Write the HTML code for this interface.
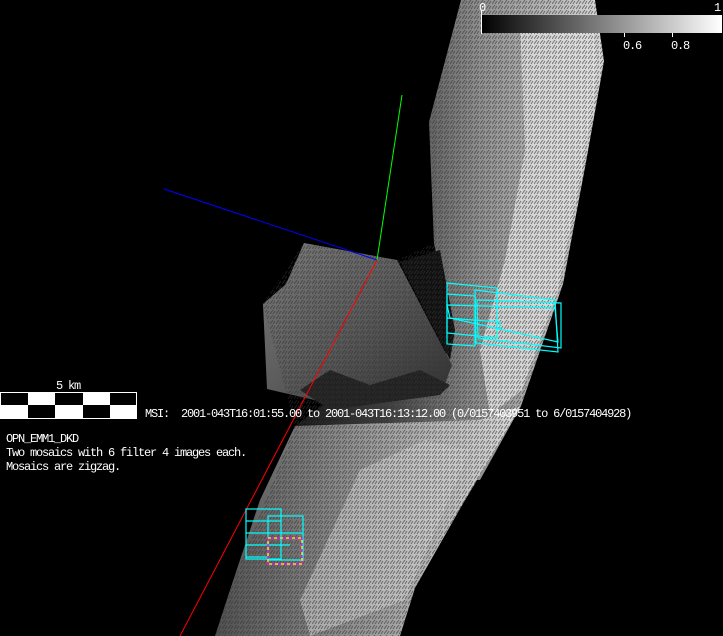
<!DOCTYPE html>
<html><head><meta charset="utf-8"><style>
html,body{margin:0;padding:0;background:#000;}
svg{display:block}
text{font-family:"Liberation Mono",monospace;fill:#fff;font-size:12px;letter-spacing:-1.2px;white-space:pre}
</style></head><body>
<svg width="723" height="636" viewBox="0 0 723 636" xmlns="http://www.w3.org/2000/svg">
<defs>
<linearGradient id="band" x1="0" y1="0" x2="1" y2="0">
<stop offset="0" stop-color="#151515"/><stop offset="0.3" stop-color="#404040"/><stop offset="0.6" stop-color="#909090"/><stop offset="1" stop-color="#d8d8d8"/>
</linearGradient>
<linearGradient id="low" x1="0" y1="0" x2="1" y2="0">
<stop offset="0" stop-color="#505050"/><stop offset="0.4" stop-color="#888"/><stop offset="0.75" stop-color="#bbb"/><stop offset="1" stop-color="#d8d8d8"/>
</linearGradient>
<linearGradient id="fan" x1="0" y1="0" x2="1" y2="1">
<stop offset="0" stop-color="#7a7a7a"/><stop offset="0.5" stop-color="#5a5a5a"/><stop offset="1" stop-color="#303030"/>
</linearGradient>
<linearGradient id="cb" x1="0" y1="0" x2="1" y2="0">
<stop offset="0" stop-color="#000"/><stop offset="1" stop-color="#fff"/>
</linearGradient>
<pattern id="dots" width="6" height="5" patternUnits="userSpaceOnUse">
<path d="M0 4 L3 0 M3 4 L5 1" stroke="#333" stroke-width="1"/>
</pattern>
<clipPath id="c"><path d="M461 0 L595 0 L604 61 L586 162 L563 284 L521 406 L461 507 L415 588 L400 636 L215 636 L230 590 L295 426 L263 304 L304 243 L397 260 L434 243 L429 122 Z"/></clipPath>
</defs>
<path d="M461 0 L595 0 L604 61 L586 162 L563 284 L521 406 L480 480 L300 470 L295 426 L330 400 L440 380 L452 330 L434 243 L429 122 Z" fill="url(#band)"/>
<path d="M520 20 L592 20 L598 70 L582 170 L558 290 L522 390 L490 415 L480 350 L505 260 L525 150 Z" fill="#e0e0e0" opacity="0.8"/>
<path d="M400 262 L440 250 L455 330 L450 360 Z" fill="#111"/>
<path d="M304 243 L397 260 L452 365 L443 389 L323 402 L267 389 L263 304 L286 284 Z" fill="url(#fan)"/>
<path d="M300 390 L330 370 L370 385 L420 370 L450 385 L440 395 L330 410 Z" fill="#222"/>
<path d="M295 426 L480 420 L521 406 L461 507 L415 588 L400 636 L215 636 L230 590 L260 500 Z" fill="url(#low)"/>
<path d="M360 470 L425 440 L470 450 L440 520 L405 600 L310 636 L300 600 Z" fill="#d0d0d0" opacity="0.55"/>
<rect x="0" y="0" width="723" height="636" fill="url(#dots)" clip-path="url(#c)" opacity="0.6"/>
<line x1="402" y1="95" x2="377" y2="260" stroke="#00ff00" stroke-width="1"/>
<line x1="164" y1="189" x2="377" y2="260" stroke="#0000ff" stroke-width="1"/>
<line x1="377" y1="260" x2="180" y2="636" stroke="#ff0000" stroke-width="1"/>
<g fill="none" stroke="#00ffff" stroke-width="1.2">
<path d="M447 283 L497 288 L497 338 L447 333 Z"/>
<path d="M447 294 L475 296 L475 346 L447 344 Z"/>
<path d="M475 290 L555 300 L558 352 L476 343 Z"/>
<path d="M477 300 L561 303 L561 348 L478 338 Z"/>
<path d="M447 305 L555 308 L558 342 L450 318 Z"/>
<path d="M447 318 L500 322 L500 330"/>
</g>
<g fill="none" stroke="#00ffff" stroke-width="1.2">
<rect x="246" y="509" width="35" height="50"/>
<rect x="268" y="516" width="35" height="44"/>
<path d="M246 521 L281 521 M246 533 L303 533 M246 545 L290 545 M246 557 L268 557"/>
</g>
<rect x="268" y="538" width="34" height="26" fill="none" stroke="#ff00ff" stroke-width="1.3"/>
<rect x="268" y="538" width="34" height="26" fill="none" stroke="#ffff00" stroke-width="1.3" stroke-dasharray="3 3"/>
<rect x="0.5" y="392.5" width="136" height="26" fill="#fff" stroke="#fff"/>
<g fill="#000">
<rect x="1" y="393" width="27" height="12"/><rect x="55" y="393" width="28" height="12"/><rect x="110" y="393" width="26" height="12"/>
<rect x="28" y="405" width="27" height="13"/><rect x="83" y="405" width="27" height="13"/>
</g>
<text x="56" y="389">5 km</text>
<text x="145" y="417" xml:space="preserve">MSI:  2001-043T16:01:55.00 to 2001-043T16:13:12.00 (0/0157403951 to 6/0157404928)</text>
<text x="6" y="442">OPN_EMM1_DKD</text>
<text x="6" y="456">Two mosaics with 6 filter 4 images each.</text>
<text x="6" y="470">Mosaics are zigzag.</text>
<rect x="481" y="15" width="241" height="18" fill="url(#cb)"/>
<line x1="481.5" y1="10" x2="481.5" y2="34" stroke="#fff"/>
<line x1="624.5" y1="33" x2="624.5" y2="37" stroke="#fff"/>
<line x1="672.5" y1="33" x2="672.5" y2="37" stroke="#fff"/>
<text x="479" y="11">0</text>
<text x="714" y="11">1</text>
<text x="623" y="49">0.6</text>
<text x="671" y="49">0.8</text>
</svg>
</body></html>
